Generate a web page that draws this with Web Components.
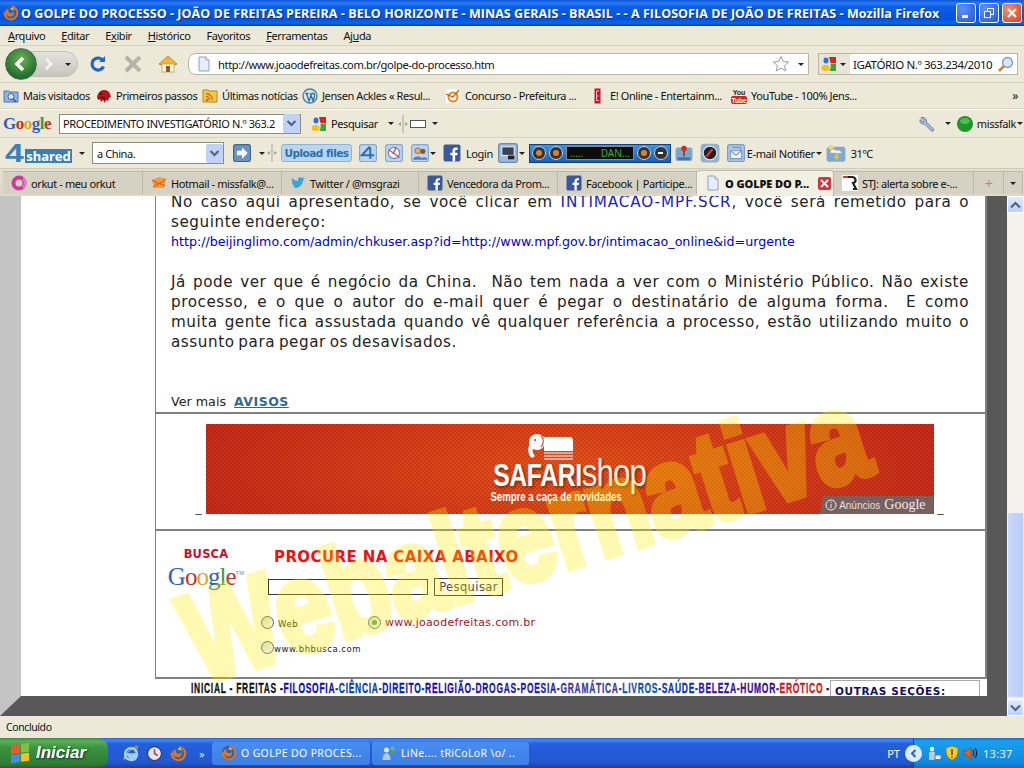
<!DOCTYPE html>
<html lang="pt">
<head>
<meta charset="utf-8">
<title>O GOLPE DO PROCESSO</title>
<style>
  html, body { margin: 0; padding: 0; width: 1024px; height: 768px; overflow: hidden; background: #ece9d8; }
  body { display: flex; flex-direction: column; font: 11px "Noto Sans", sans-serif; letter-spacing: -.4px; color: #111; }
</style>
</head>
<body>
<xp-titlebar></xp-titlebar>
<ff-menubar></ff-menubar>
<ff-navbar></ff-navbar>
<ff-bookmarks></ff-bookmarks>
<ff-googlebar></ff-googlebar>
<ff-sharedbar></ff-sharedbar>
<ff-tabs></ff-tabs>
<jf-viewport>
  <jf-article></jf-article>
  <jf-banner></jf-banner>
  <jf-search></jf-search>
  <jf-footernav></jf-footernav>
</jf-viewport>
<ff-status></ff-status>
<xp-taskbar></xp-taskbar>

<script>
const ICONS = {
  firefox: `<circle cx="8" cy="8" r="7.4" fill="#2b63b4"/><path d="M8 .6a7.4 7.4 0 1 1-7.3 6c.4.9.9 1.2 1.5 1.2.1-2 1.400-3.200 3.100-3.800C4.900 6.200 6 8.300 8.200 8.300c1.300 0 2.200-.8 2.300-2 1.500 2.700-.6 5.500-3.500 5.300C4.800 11.400 3 9.800 3.200 8 3 11 4.800 13.500 8 13.500c3.400 0 5.500-2.800 5.300-5.800-.2-3-2.300-5.200-4.400-5.500.5-.6.3-1.200-.9-1.600z" fill="#e8731a"/><path d="M8.800 2.200c1.500.8 2.400 2 2.400 3.300-1-1-2.400-1.300-3.800-1 .2-1 .7-1.700 1.400-2.300z" fill="#f9c23c"/>`,
  page: `<path d="M3 1h7l3 3v11H3z" fill="#e6eefa" stroke="#8ba3c7"/><path d="M10 1v3h3" fill="#fff" stroke="#8ba3c7"/>`,
  visited: `<path d="M1 3h5l1 1h8v10H1z" fill="#8eb4e3" stroke="#4a76b0"/><circle cx="8" cy="8.500" r="3" fill="#dce9f9" stroke="#2f5f9e"/><path d="M10 11l3 3" stroke="#2f5f9e" stroke-width="1.600"/>`,
  redhat: `<path d="M1 9c1-4 3-7 7-7 3 0 5 1 6 4l1 3-2 1-1 3-2-1-1 3-2-3-2 2-1-3-2 1z" fill="#b3131b"/><circle cx="5" cy="6" r="1" fill="#111"/><path d="M3 11l3-2 3 2" fill="none" stroke="#400" />`,
  rss: `<path d="M1 2h5l1 1h8v11H1z" fill="#f2c94c" stroke="#b58a17"/><circle cx="5" cy="12" r="1.300" fill="#d9661b"/><path d="M4 8.500a3.500 3.500 0 0 1 3.500 3.500M4 5.500a6.500 6.500 0 0 1 6.500 6.500" fill="none" stroke="#d9661b" stroke-width="1.400"/>`,
  wp: `<circle cx="8" cy="8" r="7" fill="#d8e6ee" stroke="#4c84a0" stroke-width="1.400"/><path d="M3.500 5.500h3M9 5.500h3.500M4.500 5.500l2.500 7.500 2-5.500-1-2M8.500 5.500l2.500 7.500 1.500-4.500c.3-1 0-2-.6-3" fill="none" stroke="#2f6f90" stroke-width="1.300"/>`,
  concurso: `<rect x="1" y="1" width="14" height="14" fill="#fff"/><circle cx="8" cy="9" r="4.500" fill="none" stroke="#e8881a" stroke-width="2"/><path d="M1 6l7 3 6-7" fill="none" stroke="#c9561a" stroke-width="1.200"/>`,
  eonline: `<rect x="4.500" y="0.500" width="6" height="15" fill="#d4101c"/><path d="M6.500 3h2.500M6.500 8h2M6.500 12.500h2.500M6.500 3v9.500" stroke="#fbd" stroke-width="1" fill="none"/>`,
  youtube: `<rect x="0" y="8" width="16" height="8" rx="2" fill="#d9231f"/><text x="8" y="6.500" font-size="7" font-family="Liberation Sans" font-weight="bold" text-anchor="middle" fill="#222" letter-spacing="0">You</text><text x="8" y="14.500" font-size="6.500" font-family="Liberation Sans" font-weight="bold" text-anchor="middle" fill="#fff" letter-spacing="0">Tube</text>`,
  gmulti: `<path d="M8 1h7v6H9.500z" fill="#d8241c"/><path d="M9.500 7.500H15V15H8.500c1.200-2.500 1.500-5 1-7.500z" fill="#3aa63a"/><ellipse cx="4.500" cy="12" rx="4" ry="3" fill="#f4c20d"/><ellipse cx="5" cy="4.500" rx="2.500" ry="3" fill="#2f6fd8"/>`,
  wrench: `<path d="M2 1.500l3 3-1 1.500-3-2.500c-.5 3 1.500 5 4.500 4.500l7 7c1 1 3-1 2-2l-7-7c.5-3-2-5-5.500-4.500z" fill="#a9bbd6" stroke="#4b6b99" stroke-width=".8"/>`,
  blue4: `<rect x=".5" y=".5" width="15" height="15" rx="2" fill="#bcd4ee" stroke="#86a8cc"/><path d="M9.500 2.500L2.500 10h11M10 3v10" fill="none" stroke="#2a6fae" stroke-width="1.800"/>`,
  globe: `<rect x=".5" y=".5" width="15" height="15" rx="2" fill="#bcd4ee" stroke="#86a8cc"/><circle cx="8" cy="8" r="5" fill="#e6f0fa" stroke="#6a8fb5"/><path d="M3 5l6 4 4 3M10 3L7 9" stroke="#c14a4a" fill="none"/>`,
  people: `<rect x=".5" y=".5" width="15" height="15" rx="2" fill="#bcd4ee" stroke="#86a8cc"/><circle cx="6" cy="6" r="2.500" fill="#e9b06a" stroke="#7a4a10" stroke-width=".6"/><circle cx="10.500" cy="6.500" r="2.300" fill="#8a5a2a"/><path d="M2 14c0-4 8-4 8 0zM9 14c0-3 5.500-3 5.500 0z" fill="#4f7fb8"/>`,
  fb: `<rect x=".5" y=".5" width="15" height="15" rx="1.500" fill="#3b5998"/><path d="M10.800 15.500V10h1.900l.3-2.200h-2.200V6.400c0-.7.2-1.100 1.100-1.100H13V3.300c-.2 0-.9-.1-1.700-.1-1.700 0-2.800 1-2.800 2.900v1.700H6.600V10h1.900v5.500z" fill="#fff"/>`,
  monitor: `<rect x=".5" y=".5" width="15" height="15" rx="2" fill="#9bb9d8" stroke="#6a8db3"/><rect x="3" y="3" width="10" height="7" fill="#39424e" stroke="#dde7f2"/><rect x="8" y="10" width="5" height="3" fill="#222"/>`,
  arrowR: `<rect x=".5" y=".5" width="15" height="15" rx="2" fill="#6b93bf" stroke="#3d6792"/><path d="M3.500 6h4.500V3l5 5-5 5v-3H3.500z" fill="#fff"/>`,
  joy: `<rect x=".5" y="3" width="15" height="12" rx="2" fill="#7fa4c9"/><path d="M3 12h10l1 2H2z" fill="#3e6a96"/><path d="M8 5v6" stroke="#555" stroke-width="1.500"/><circle cx="8" cy="4" r="2.500" fill="#d42a1c"/>`,
  gauge: `<rect x=".5" y=".5" width="15" height="15" rx="3" fill="#8fb0d0"/><circle cx="8" cy="8" r="5.500" fill="#222" stroke="#dbe6f0"/><path d="M5 11l5-6" stroke="#e33" stroke-width="1.600"/>`,
  mail: `<rect x=".5" y=".5" width="15" height="15" rx="2" fill="#a9c5e2" stroke="#7c9dc2"/><path d="M3 6h10v7H3z" fill="#eef4fa" stroke="#7c9dc2"/><path d="M3 6l5 4 5-4M5 3h7v3" fill="none" stroke="#7c9dc2"/>`,
  weather: `<rect x=".5" y="3" width="15" height="12" rx="2" fill="#7fa9d4"/><path d="M3 8c0-3 4-4 5-2 2-1 5 0 4.500 2.500z" fill="#f2f2ee" stroke="#999" stroke-width=".5"/><path d="M9 8l-3 4h2l-1 3 4-4.500H9l1-2.500z" fill="#f5c518"/><circle cx="4" cy="3.500" r="2" fill="#f6d55c"/>`,
  mail2: `<path d="M1 5l7-3 7 2-2 9H3z" fill="#f29b3a"/><path d="M1 5l7 4 7-5M2 12l5-3M14 11l-5-2.500" fill="none" stroke="#d9481c"/>`,
  twitter: `<path d="M1 12c5 2.500 11 .5 12-6.500l2-2-2 .5 1-2-2 1C10 1 7 3 8 6 5.500 6 3 4.500 2 3 1.500 5 2 6.500 3 7.500L2 7c0 2 1 3 2.500 3.500H3c.5 1 1.500 1.500 2.500 1.500C4 13 2.500 13 1 12z" fill="#3aa6d8"/>`,
  orkut: `<circle cx="8" cy="8" r="5.500" fill="none" stroke="#cc3b9c" stroke-width="4"/><path d="M12 3.500a5.500 5.500 0 0 1 0 9" fill="none" stroke="#e87ac4" stroke-width="3"/>`,
  stj: `<rect x="0" y="0" width="16" height="16" fill="#fff"/><path d="M1 2h9c4 0 5 5 1 6l3 6h-3M1 2" fill="none" stroke="#222" stroke-width="2.200"/><path d="M1 2h5" stroke="#d33" stroke-width="2"/>`,
  ie: `<path d="M3 9h11c0-4-2-6-5.500-6C5 3 3 6 3 9s2 5 5.500 5c2.500 0 4.500-1 5-3h-3c-1 1.200-4 1.200-4.500-2" fill="none" stroke="#9fd0ff" stroke-width="2.400"/><path d="M2 14C1 11 8 3 14 1c2 1-1 4-2 5" fill="none" stroke="#f2c230" stroke-width=".9"/>`,
  clock: `<circle cx="8" cy="8" r="6.500" fill="#dce9fa" stroke="#335"/><path d="M8 4v4l3 2" stroke="#c33" stroke-width="1.500" fill="none"/>`,
  people2: `<circle cx="5.500" cy="5" r="2.500" fill="#dfe7f2"/><path d="M1.500 15c0-9 8-9 8 0z" fill="#b9c9dd"/><circle cx="11.500" cy="3.500" r="2" fill="#6fbd5a"/><path d="M9 9c0-4 6-4 6-1z" fill="#5ba14a"/>`,
  shield: `<path d="M8 1l6 2c0 6-1 10-6 12C3 13 2 9 2 3z" fill="#f4cf2e" stroke="#a8860e"/><path d="M8 4v6M8 11.500v1.500" stroke="#8a4a0a" stroke-width="1.800"/>`,
  speaker: `<path d="M2 6h3l4-4v12l-4-4H2z" fill="#e0661c" stroke="#8a3a0a" stroke-width=".6"/><path d="M11 5c1 2 1 4 0 6M13 3c2 3 2 7 0 10" fill="none" stroke="#1a1a1a" stroke-width="1.200"/>`,
  netdev: `<circle cx="6" cy="4" r="2.200" fill="#f1f4fa"/><path d="M3 15V8c0-2 6-2 6 0v7z" fill="#b9cfe8"/><rect x="9" y="10" width="6" height="4.500" fill="#e8eef6" stroke="#678"/>`
};
const icon = (name, size = 16) => `<svg width="${size}" height="${size}" viewBox="0 0 16 16" style="display:block;flex:none">${ICONS[name]}</svg>`;
const drop = `<i style="display:block;flex:none;width:0;height:0;border:3px solid transparent;border-top:3px solid #222;border-bottom:0"></i>`;
const grip = `<svg width="10" height="20" viewBox="0 0 10 20" style="display:block;flex:none"><path d="M5 1v18" stroke="#aaa69a"/><path d="M3 8l-3 2 3 2zM7 8l3 2-3 2z" fill="#a9a594"/></svg>`;
const comboBtn = `<svg width="17" height="19" viewBox="0 0 17 19" style="display:block;flex:none"><rect width="17" height="19" rx="2" fill="#c1d2f7"/><path d="M4.500 7l4 4 4-4" fill="none" stroke="#4d6185" stroke-width="2"/></svg>`;

// base for the small bars: shadow root set from css + html
class Bar extends HTMLElement {
  connectedCallback() {
    this.attachShadow({ mode: "open" }).innerHTML = `<style>:host{display:flex;align-items:center;flex:none;box-sizing:border-box}${this.css()}</style>${this.html()}`;
  }
  css() { return ""; }
  html() { return ""; }
}

class XpTitlebar extends Bar {
  css() { return `
    :host{height:26px;padding:0 2px 0 3px;color:#fff;background:linear-gradient(#0a55d8 0,#2a7cf4 3px,#0a5ee6 7px,#0553dc 19px,#0a66ee 23px,#0344b8 26px);font:bold 12.5px "Open Sans","Noto Sans",sans-serif;letter-spacing:.06px;text-shadow:1px 1px 0 #0b2f8c}
    .t{margin-left:2px;flex:1;white-space:nowrap}
    .b{width:20px;height:20px;border:1px solid #fff;border-radius:3px;box-sizing:border-box;background:radial-gradient(circle at 30% 30%,#5b92f5,#2457d8);margin-left:3px;display:flex;align-items:center;justify-content:center}
    .x{background:radial-gradient(circle at 30% 30%,#ee9077,#d4411c)}
  `; }
  html() { return `${icon("firefox")}<span class="t">O GOLPE DO PROCESSO - JOÃO DE FREITAS PEREIRA - BELO HORIZONTE - MINAS GERAIS - BRASIL - - A FILOSOFIA DE JOÃO DE FREITAS - Mozilla Firefox</span>
    <div class="b"><svg width="12" height="12"><rect x="2" y="8" width="6" height="3" fill="#fff"/></svg></div>
    <div class="b"><svg width="12" height="12" fill="none" stroke="#fff"><rect x="4.500" y="1.500" width="6" height="6"/><rect x="1.500" y="4.500" width="6" height="6" fill="#3a6ce0"/></svg></div>
    <div class="b x"><svg width="12" height="12"><path d="M2 2l8 8M10 2l-8 8" stroke="#fff" stroke-width="2"/></svg></div>`; }
}

class FfMenubar extends Bar {
  css() { return `:host{height:20px;gap:16px;padding-left:8px;border-bottom:1px solid #d8d4c4}u{text-decoration-thickness:1px;text-underline-offset:1px}`; }
  html() { return `<span><u>A</u>rquivo</span><span><u>E</u>ditar</span><span>E<u>x</u>ibir</span><span><u>H</u>istórico</span><span>Fa<u>v</u>oritos</span><span><u>F</u>erramentas</span><span>Aj<u>u</u>da</span>`; }
}

class FfNavbar extends Bar {
  css() { return `
    :host{height:37px;padding-left:5px;border-bottom:1px solid #d8d4c4}
    .back{width:32px;height:32px;border-radius:50%;background:radial-gradient(circle at 50% 35%,#6fb05a,#1f6b2a 75%);border:1px solid #5d6f5d;box-sizing:border-box;display:flex;align-items:center;justify-content:center;position:relative;z-index:1}
    .fwd{width:55px;height:26px;margin-left:-14px;padding-left:17px;box-sizing:border-box;border-radius:0 13px 13px 0;background:linear-gradient(#e4e2da,#c8c6be);border:1px solid #c4c2b8;display:flex;align-items:center;gap:6px}
    .url{width:621px;height:22px;margin-left:10px;box-sizing:border-box;border:1px solid #b8b5a4;border-radius:8px 0 0 8px;background:#fff;display:flex;align-items:center;padding-left:7px;font-size:11.200px}
    .url span{margin-left:6px;flex:1}
    .s{width:200px;height:22px;margin-left:9px;box-sizing:border-box;border:1px solid #b8b5a4;background:#fff;display:flex;align-items:center;font-size:11.500px}
    .g{display:flex;align-items:center;gap:3px;background:#e8e5d8;padding:0 4px 0 2px;height:20px;margin-right:3px}
    .mg{margin-left:5px}
  `; }
  html() { return `<div class="back"><svg width="18" height="18"><path d="M11 3L5 9l6 6" fill="none" stroke="#fff" stroke-width="3.400"/></svg></div>
    <div class="fwd"><svg width="14" height="14"><path d="M5 2l5 5-5 5" fill="none" stroke="#f4f2ec" stroke-width="3"/></svg><span style="margin-left:4px">${drop}</span></div>
    <svg style="margin-left:11px;flex:none" width="18" height="18" viewBox="0 0 18 18"><path d="M14.500 11.500A6 6 0 1 1 13 4.500" fill="none" stroke="#1f66c9" stroke-width="3.200"/><path d="M10 7h6V1z" fill="#1f66c9"/></svg>
    <svg style="margin-left:16px;flex:none" width="20" height="18" viewBox="0 0 20 18"><path d="M3 2l14 14M17 2L3 16" stroke="#b5b3aa" stroke-width="4"/></svg>
    <svg style="margin-left:15px;flex:none" width="20" height="18" viewBox="0 0 20 18"><path d="M1 9l9-8 9 8-2 1H3z" fill="#f2b632" stroke="#b07a16" stroke-width=".8"/><rect x="4" y="9" width="12" height="8" fill="#fbf3d8" stroke="#b9a66a" stroke-width=".8"/><rect x="8" y="11" width="4" height="6" fill="#8a5a2a"/></svg>
    <div class="url">${icon("page")}<span>http://www.joaodefreitas.com.br/golpe-do-processo.htm</span>
      <svg width="18" height="18" viewBox="0 0 18 18" style="flex:none"><path d="M9 1.500l2.300 5 5.200.6-3.900 3.500 1.100 5.300L9 13.200l-4.700 2.700 1.100-5.300L1.500 7.100l5.200-.6z" fill="#fff" stroke="#9a9a92"/></svg>
      <span style="flex:none;margin:0 4px 0 8px">${drop}</span></div>
    <div class="s"><div class="g">${icon("gmulti")}${drop}</div><span style="white-space:nowrap">IGATÓRIO N.º 363.234/2010</span>
      <svg class="mg" width="17" height="17" viewBox="0 0 17 17" style="flex:none"><circle cx="10.500" cy="6.500" r="5" fill="#d5e6f7" stroke="#7a9cbe" stroke-width="1.300"/><path d="M7 10l-5 5" stroke="#c9853a" stroke-width="2.600"/></svg></div>`; }
}

class FfBookmarks extends Bar {
  css() { return `
    :host{height:26px;padding-left:3px;border-bottom:1px solid #d8d4c4}
    .i{display:flex;align-items:center;gap:4px;flex:none;white-space:nowrap}
    .m{margin-left:auto;margin-right:6px;font-size:12px}
  `; }
  html() {
    const items = [["visited","Mais visitados",93],["redhat","Primeiros passos",106],["rss","Últimas notícias",100],["wp","Jensen Ackles « Resul...",143],["concurso","Concurso - Prefeitura ...",145],["eonline","E! Online - Entertainm...",141],["youtube","YouTube - 100% Jens...",170]];
    return items.map(([n, t, w]) => `<div class="i" style="width:${w}px">${icon(n)}<span>${t}</span></div>`).join("") + `<span class="m">»</span>`;
  }
}

class FfGooglebar extends Bar {
  css() { return `
    :host{height:29px;padding-left:3px;border-bottom:1px solid #d8d4c4;border-top:1px solid #fff}
    .logo{font:bold 17px "Liberation Serif",serif;letter-spacing:-.5px;width:56px;flex:none}
    .combo{width:242px;height:20px;box-sizing:border-box;border:1px solid #8f8d80;background:#fff;display:flex;align-items:center;padding-left:3px;justify-content:space-between;white-space:nowrap;font-size:11px}
    .sp{flex:1}
  `; }
  html() { return `<div class="logo"><span style="color:#2f5fc4">G</span><span style="color:#c8321e">o</span><span style="color:#e0a818">o</span><span style="color:#2f5fc4">g</span><span style="color:#3a9a3a">l</span><span style="color:#c8321e">e</span></div>
    <div class="combo"><span>PROCEDIMENTO INVESTIGATÓRIO N.º 363.2</span>${comboBtn}</div>
    <span style="margin-left:10px">${icon("gmulti")}</span><span style="margin-left:4px">Pesquisar</span>
    <span style="margin-left:10px">${drop}</span><span style="margin-left:4px">${grip}</span>
    <svg style="margin-left:2px;flex:none" width="16" height="8"><rect x=".5" y=".5" width="15" height="7" fill="#fff" stroke="#555"/></svg><span style="margin-left:6px">${drop}</span>
    <span class="sp"></span>${icon("wrench")}<span style="margin-left:10px">${drop}</span>
    <svg style="margin-left:6px;flex:none" width="16" height="16"><circle cx="8" cy="8" r="8" fill="#22922a"/><ellipse cx="8" cy="5" rx="5" ry="3" fill="#4fc04f"/></svg>
    <span style="margin-left:4px">missfalk</span><span style="margin-left:1px;margin-right:1px">${drop}</span>`; }
}

class FfSharedbar extends Bar {
  css() { return `
    :host{height:30px;padding-left:5px}
    .logo{display:flex;align-items:flex-end;width:67px;flex:none;height:22px;letter-spacing:0}
    .four{display:block;font:bold 25px "Liberation Sans",sans-serif;color:#3f7fb5;line-height:22px;width:20px;transform:scaleX(1.35);transform-origin:0 50%}
    .sh{background:#3a7fb5;color:#fff;font:bold 13px "Noto Sans",sans-serif;height:14px;line-height:14px;flex:1;margin-bottom:1px;text-align:center}
    .combo{width:132px;height:22px;box-sizing:border-box;border:1px solid #8f8d80;background:#fff;display:flex;align-items:center;justify-content:space-between;padding-left:4px;font-size:11px}
    .up{width:71px;height:18px;box-sizing:border-box;background:#b8d5f2;border:1px solid #8fb3d8;border-radius:3px;font:bold 10.500px "DejaVu Sans",sans-serif;color:#2a6fae;display:flex;align-items:center;justify-content:center;white-space:nowrap;letter-spacing:-.5px}
    .pl{width:142px;height:19px;box-sizing:border-box;background:linear-gradient(#3d94e0,#1a5fb0);border:1px solid #0d3f8a;display:flex;align-items:center;padding:0 2px;gap:3px;letter-spacing:0}
    .rb{width:14px;height:14px;border-radius:50%;background:#333;border:1px solid #ccc;box-sizing:border-box;flex:none;display:flex;align-items:center;justify-content:center}
    .rb i{display:block;width:6px;height:6px;border-radius:50%;background:#d9822b}
    .lcd{width:68px;height:14px;background:#0c0c0c;border:1px solid #888;box-sizing:border-box;color:#2fb52f;font-size:10px;line-height:12px;display:flex;justify-content:space-between;padding:0 3px;white-space:nowrap;flex:none}
  `; }
  html() { return `<div class="logo"><span class="four">4</span><span class="sh">shared</span></div>
    <span style="margin-left:7px">${drop}</span>
    <div class="combo" style="margin-left:7px"><span>a China.</span>${comboBtn}</div>
    <span style="margin-left:9px">${icon("arrowR",18)}</span><span style="margin-left:8px">${drop}</span><span style="margin-left:2px">${grip}</span>
    <div class="up" style="margin-left:4px">Upload files</div>
    <span style="margin-left:7px">${icon("blue4",18)}</span><span style="margin-left:8px">${icon("globe",18)}</span><span style="margin-left:8px">${icon("people",18)}</span><span style="margin-left:1px">${drop}</span>
    <span style="margin-left:7px">${icon("fb",18)}</span><span style="margin-left:5px">Login</span>
    <span style="margin-left:5px">${icon("monitor",20)}</span><span style="margin-left:1px">${drop}</span>
    <div class="pl" style="margin-left:4px"><span class="rb"><i></i></span><span class="rb"><i></i></span><span class="lcd"><span>.....</span><span>DAN...</span></span><span class="rb"><i></i></span><span class="rb"><i style="width:5px;height:2px;border-radius:0;background:#fff"></i></span></div>
    <span style="margin-left:4px">${icon("joy",18)}</span><span style="margin-left:7px">${icon("gauge",20)}</span><span style="margin-left:7px">${icon("mail",18)}</span>
    <span style="margin-left:2px;white-space:nowrap">E-mail Notifier</span><span style="margin-left:1px">${drop}</span>
    <span style="margin-left:4px">${icon("weather",20)}</span><span style="margin-left:5px">31ºC</span>`; }
}

class FfTabs extends Bar {
  css() { return `
    :host{height:28px;align-items:flex-start;padding:2px 0 0 3px;background:linear-gradient(#e4e0d0,#ddd9c9);border-top:1px solid #cfcbbc}
    .t{height:23px;box-sizing:border-box;flex:none;display:flex;align-items:center;gap:4px;padding:0 0 0 8px;background:#d6d2c3;border:1px solid #bdb9a9;border-bottom:0;border-left:0;white-space:nowrap}
    .t:first-child{border-left:1px solid #bdb9a9}
    .on{height:26px;margin-top:-1px;padding-bottom:1px;background:#f2efe3;font-weight:bold;border-radius:3px 3px 0 0;font-size:11px;color:#111;letter-spacing:-.1px}
    .on b{flex:1}
    .x{width:13px;height:13px;background:#d8333a;border-radius:2px;margin-right:2px;display:flex;align-items:center;justify-content:center;flex:none}
    .c{justify-content:center;padding:0;color:#9a968a;font-size:15px}
  `; }
  html() {
    const tabs = [["orkut","orkut - meu orkut",140],["mail2","Hotmail - missfalk@...",139],["twitter","Twitter / @msgrazi",137],["fb","Vencedora da Prom...",139],["fb","Facebook | Participe...",139]];
    return tabs.map(([n, t, w]) => `<div class="t" style="width:${w}px">${icon(n)}<span>${t}</span></div>`).join("") +
      `<div class="t on" style="width:137px">${icon("page")}<b>O GOLPE DO P...</b><span class="x"><svg width="9" height="9"><path d="M1 1l7 7M8 1L1 8" stroke="#fff" stroke-width="2"/></svg></span></div>
       <div class="t" style="width:140px">${icon("stj")}<span>STJ: alerta sobre e-...</span></div>
       <div class="t c" style="width:30px">+</div><div class="t c" style="width:19px">${drop}</div>`;
  }
}

// page area: 3D frame of the old site + scrollbar on the right
class JfViewport extends HTMLElement {
  connectedCallback() {
    this.attachShadow({ mode: "open" }).innerHTML = `<style>
      :host{display:flex;flex:none;height:520px;position:relative;overflow:hidden;background:#fff;letter-spacing:0}
      .frame{width:1007px;box-sizing:border-box;border-left:21px solid #c4c4c4;border-right:20px solid #585858;border-bottom:20px solid #585858;padding-left:134px;background:#fff;flex:none;display:flex;flex-direction:column}
      .sb{width:17px;flex:none;background:#f3f3ec;display:flex;flex-direction:column;justify-content:space-between;position:relative}
      .btn{height:17px;background:linear-gradient(#e2ebfd,#bcd0f8);border:1px solid #fff;box-sizing:border-box;border-radius:2px;display:flex;align-items:center;justify-content:center}
      .thumb{position:absolute;left:0;right:0;top:316px;height:186px;background:linear-gradient(90deg,#c9d8fb,#b9ccf7);border:1px solid #eef3fe;box-sizing:border-box;border-radius:2px}
      .mark{position:absolute;left:206px;bottom:12px;font:bold 128px "Liberation Sans",sans-serif;color:#ffee00;-webkit-text-stroke:7px #ffee00;opacity:.3;transform:rotate(-17.500deg) scaleX(.78);transform-origin:0 100%;white-space:nowrap;pointer-events:none;line-height:1}
    </style>
    <div class="frame"><slot></slot></div>
    <div class="sb">
      <div class="btn"><svg width="11" height="8"><path d="M1 6.500l4.500-4.500 4.500 4.500" fill="none" stroke="#4d6185" stroke-width="2"/></svg></div>
      <div class="thumb"></div>
      <div class="btn"><svg width="11" height="8"><path d="M1 1.500l4.500 4.500 4.500-4.500" fill="none" stroke="#4d6185" stroke-width="2"/></svg></div>
    </div>
    <div class="mark">Webalternativa</div>`;
  }
}

class JfArticle extends HTMLElement {
  connectedCallback() {
    this.attachShadow({ mode: "open" }).innerHTML = `<style>
      :host{display:block;flex:none;height:218px;box-sizing:border-box;padding:0 16px 0 15px;border-left:1px solid #808080;border-right:2px solid #808080;border-bottom:2px solid #808080;font:15.200px/20px "DejaVu Sans",sans-serif;letter-spacing:.55px;word-spacing:-1.500px;color:#222;overflow:hidden}
      .j{text-align:justify;text-align-last:justify}
      .top{margin-top:-4px}
      .lnk{font-size:12.650px;color:#0000c8;white-space:nowrap;height:20px;margin-bottom:20px;letter-spacing:0;word-spacing:0}
      a{color:#2020c8;text-decoration:none}
      .top a{letter-spacing:.9px}
      .more{margin-top:40px;font-size:12.700px;height:20px;letter-spacing:0;word-spacing:0}
      .more a{color:#2c6a94;font-weight:bold;text-decoration:underline;font-size:12.500px;letter-spacing:.5px;margin-left:8px}
    </style>
    <div class="j top">No caso aqui apresentado, se você clicar em <a>INTIMACAO-MPF.SCR</a>, você será remetido para o</div>
    <div>seguinte endereço:</div>
    <div class="lnk">http://beijinglimo.com/admin/chkuser.asp?id=http://www.mpf.gov.br/intimacao_online&amp;id=urgente</div>
    <div class="j">Já pode ver que é negócio da China.&nbsp; Não tem nada a ver com o Ministério Público. Não existe</div>
    <div class="j">processo, e o que o autor do e-mail quer é pegar o destinatário de alguma forma.&nbsp; E como</div>
    <div class="j">muita gente fica assustada quando vê qualquer referência a processo, estão utilizando muito o</div>
    <div>assunto para pegar os desavisados.</div>
    <div class="more">Ver mais<a>AVISOS</a></div>`;
  }
}

class JfBanner extends HTMLElement {
  connectedCallback() {
    this.attachShadow({ mode: "open" }).innerHTML = `<style>
      :host{display:flex;flex:none;height:117px;box-sizing:border-box;padding:10px 2px 0 0;border-left:1px solid #808080;border-right:2px solid #808080;border-bottom:2px solid #808080;justify-content:center;align-items:flex-start;gap:4px;font:11px "Liberation Sans",sans-serif}
      .dash{align-self:flex-start;margin-top:79px;color:#222}
      .ad{width:728px;height:90px;flex:none;position:relative;display:flex;flex-direction:column;align-items:center;background:
        repeating-conic-gradient(rgba(120,0,0,.2) 0 25%,transparent 0 50%) 0 0/4px 4px,
        radial-gradient(ellipse 65% 140% at 50% 50%,#e8561a,#c0241c 100%);color:#fff}
      .logo{margin-top:9px;margin-left:-38px}
      .brand{display:flex;align-items:baseline;line-height:30px;margin-top:-5px;text-shadow:2px 2px 3px rgba(90,20,0,.6);transform:scaleX(.8)}
      .brand b{font-size:31px;letter-spacing:-.5px}
      .brand span{font-size:39px;letter-spacing:-1px;font-weight:normal;color:#fbeedd}
      .sub{font:bold 12px "Liberation Sans",sans-serif;margin-top:-1px;margin-left:-26px;white-space:nowrap;transform:scaleX(.8)}
      .tag{position:absolute;right:0;bottom:0;width:114px;height:18px;background:#76615f;display:flex;align-items:center;justify-content:flex-end;gap:2px;padding-right:8px;box-sizing:border-box;clip-path:polygon(4px 0,100% 0,100% 100%,0 100%);font-size:10px;color:#e7dfdd}
      .tag em{font:14px "Liberation Serif",serif;font-style:normal;color:#f3ecea;margin-left:2px}
    </style>
    <span class="dash">_</span>
    <div class="ad">
      <svg class="logo" width="50" height="30" viewBox="0 0 50 30">
        <path d="M18 4h26c3 0 3 3 3 6v8H18z" fill="#fff"/><path d="M18 20h29M18 23h29M18 26h29" stroke="#fff"/>
        <circle cx="11" cy="9" r="8" fill="#fff"/><path d="M4 10c-3 6-2 12 2 15l3-2c-3-3-3-7-1-10z" fill="#fff"/><circle cx="9" cy="7" r="1" fill="#a33"/><path d="M15 3c3 2 3 8 0 11" fill="none" stroke="#c53" stroke-width="1.200"/>
      </svg>
      <div class="brand"><b>SAFARI</b><span>shop</span></div>
      <div class="sub">Sempre a caça de novidades</div>
      <div class="tag"><svg width="12" height="12"><circle cx="6" cy="6" r="5" fill="none" stroke="#eee"/><path d="M6 5v4M6 3v1" stroke="#eee"/></svg><span>Anúncios</span><em>Google</em></div>
    </div>
    <span class="dash">_</span>`;
  }
}

class JfSearch extends HTMLElement {
  connectedCallback() {
    this.attachShadow({ mode: "open" }).innerHTML = `<style>
      :host{display:flex;flex:none;height:148px;box-sizing:border-box;border-left:1px solid #808080;border-right:2px solid #808080;border-bottom:2px solid #808080;padding:16px 0 0 14px;font-family:"DejaVu Sans",sans-serif}
      .l{width:72px;flex:none;display:flex;flex-direction:column;align-items:center;margin-right:26px}
      .busca{font:bold 11.500px "DejaVu Sans",sans-serif;color:#c8102e;letter-spacing:.2px}
      .g{font:25px/24px "Liberation Serif",serif;letter-spacing:-1px;margin-top:4px;white-space:nowrap}
      .g small{font:6px "Liberation Sans",sans-serif;color:#888;vertical-align:10px;letter-spacing:0}
      .r{flex:1}
      h2{margin:0 0 0 6px;font:bold 15px/20px "DejaVu Sans",sans-serif;color:#f01010;white-space:nowrap;letter-spacing:.4px}
      .f{display:flex;align-items:center;margin-top:11px;gap:6px}
      .inp{width:160px;height:16px;box-sizing:border-box;border:1px solid #333}
      .btn{width:69px;height:18px;box-sizing:border-box;border:1px solid #333;display:flex;align-items:center;justify-content:center;font-size:11.500px;color:#444;letter-spacing:.4px}
      .opts{display:grid;grid-template-columns:107px 1fr;margin-top:20px;margin-left:-7px;row-gap:10px}
      .o{display:flex;align-items:flex-start;white-space:nowrap;font-size:8.500px;line-height:13px;color:#222;letter-spacing:.5px}
      .o span:last-child{padding-top:2px}
      .rd{width:13px;height:13px;border-radius:50%;box-sizing:border-box;border:1px solid #556;background:linear-gradient(135deg,#d8d6cc,#fff);margin-right:4px;flex:none;display:flex;align-items:center;justify-content:center}
      .rd.on{border-color:#3b6ea5}.rd.on i{display:block;width:5px;height:5px;border-radius:50%;background:#39b54a}
      .red{font-size:11px;color:#b01020;letter-spacing:.3px;padding-top:0 !important}
      .blue{border-color:#2a5aa8;background:linear-gradient(135deg,#c5d8f2,#fff);margin-right:0}
    </style>
    <div class="l"><span class="busca">BUSCA</span>
      <div class="g"><span style="color:#2f5fc4">G</span><span style="color:#c8321e">o</span><span style="color:#e0a818">o</span><span style="color:#2f5fc4">g</span><span style="color:#3a9a3a">l</span><span style="color:#c8321e">e</span><small>TM</small></div></div>
    <div class="r">
      <h2>PROCURE NA CAIXA ABAIXO</h2>
      <div class="f"><div class="inp"></div><div class="btn">Pesquisar</div></div>
      <div class="opts">
        <div class="o"><span class="rd"></span><span>Web</span></div>
        <div class="o"><span class="rd on"><i></i></span><span class="red">www.joaodefreitas.com.br</span></div>
        <div class="o" style="grid-column:1/3"><span class="rd blue"></span><span>www.bhbusca.com</span></div>
      </div>
    </div>`;
  }
}

class JfFooternav extends HTMLElement {
  connectedCallback() {
    const words = [["FILOSOFIA","#0a0ac0"],["CIÊNCIA","#0a3ac0"],["DIREITO","#0a1ab8"],["RELIGIÃO","#1a0ab8"],["DROGAS","#1a1aa8"],["POESIA","#1a1ab8"],["GRAMÁTICA","#3a3ab0"],["LIVROS","#0a50c0"],["SAÚDE","#0a30c8"],["BELEZA","#2a10b0"],["HUMOR","#3a0a98"]];
    this.attachShadow({ mode: "open" }).innerHTML = `<style>
      :host{display:flex;flex:none;height:17px;align-items:center;padding-left:36px;white-space:nowrap}
      .w{width:636px;flex:none}
      .n{display:inline-block;width:max-content;font:bold 14px "Liberation Sans",sans-serif;letter-spacing:1.200px;transform:scaleX(.605);transform-origin:0 50%;-webkit-text-stroke:.3px currentColor}
      .box{flex:none;width:150px;height:16px;margin-left:3px;align-self:flex-end;box-sizing:border-box;border:1px solid #aaa;border-bottom:0;font:bold 10.500px/17px "DejaVu Sans",sans-serif;letter-spacing:.6px;color:#101060;padding:2px 0 0 4px;overflow:hidden}
    </style>
    <div class="w"><span class="n"><span>INICIAL - FREITAS -</span>${words.map(([w, c]) => `<span style="color:${c}">${w}</span><span style="color:#147">-</span>`).join("")}<span style="color:#e01010">ERÓTICO</span> -</span></div>
    <div class="box">OUTRAS SEÇÕES:</div>`;
  }
}

class FfStatus extends Bar {
  css() { return `:host{height:22px;padding-left:6px;background:#ece9d8;font-size:10.500px}`; }
  html() { return `Concluído`; }
}

class XpTaskbar extends Bar {
  css() { return `
    :host{height:30px;color:#fff;background:linear-gradient(#245edb 0,#3f8cf3 2px,#245edb 6px,#2358d0 24px,#1941a5 30px);font-size:11px;letter-spacing:0}
    .st{width:108px;height:30px;flex:none;background:linear-gradient(#388e3c 0,#5aae5a 3px,#3c923f 10px,#2f7d32 26px,#255f27 30px);border-radius:0 10px 10px 0;display:flex;align-items:center;gap:7px;padding-left:11px;box-sizing:border-box;font:italic bold 17px "Liberation Sans",sans-serif;text-shadow:1px 1px 2px #133}
    .flag{width:18px;height:18px;display:grid;grid-template:1fr 1fr/1fr 1fr;gap:1px;transform:skewY(-8deg);flex:none}
    .ql{display:flex;align-items:center;gap:7px;margin-left:14px;width:90px;flex:none}
    .tb{height:23px;box-sizing:border-box;border-radius:3px;background:linear-gradient(#4a8df0,#3c7fe6);display:flex;align-items:center;gap:4px;padding-left:9px;flex:none;margin-right:2px;white-space:nowrap;font-size:10.500px;letter-spacing:.35px}
    .tray{width:111px;height:30px;flex:none;box-sizing:border-box;background:linear-gradient(#0c6fd6 0,#19a0ee 3px,#1288e0 24px,#0f6fc6 30px);border-left:1px solid #0a4a9e;display:flex;align-items:center;gap:2px}
    .chev{width:17px;height:17px;border-radius:50%;background:#dbeafd;display:flex;align-items:center;justify-content:center;flex:none;margin:0 2px 0 -9px}
  `; }
  html() { return `<div class="st"><div class="flag"><i style="background:#e8592c"></i><i style="background:#7cc142"></i><i style="background:#3d8fe0"></i><i style="background:#f5c21b"></i></div>Iniciar</div>
    <div class="ql">${icon("ie",17)}${icon("clock",17)}${icon("firefox",17)}<span style="font-size:11px;color:#cfe0fb;margin-left:5px">»</span></div>
    <div class="tb" style="width:158px">${icon("firefox")}<span>O GOLPE DO PROCES...</span></div>
    <div class="tb" style="width:157px">${icon("people2")}<span>LiNe.... tRiCoLoR \\o/ ..</span></div>
    <span style="margin-left:auto;margin-right:13px">PT</span>
    <div class="tray"><span class="chev"><svg width="9" height="9"><path d="M6.500 1L3 4.500 6.500 8" fill="none" stroke="#245edb" stroke-width="2"/></svg></span>
      ${icon("netdev")}${icon("shield")}${icon("speaker")}<span style="margin-left:3px;font-size:11px;color:#eaf3ff;letter-spacing:.3px">13:37</span></div>`; }
}

customElements.define("xp-titlebar", XpTitlebar);
customElements.define("ff-menubar", FfMenubar);
customElements.define("ff-navbar", FfNavbar);
customElements.define("ff-bookmarks", FfBookmarks);
customElements.define("ff-googlebar", FfGooglebar);
customElements.define("ff-sharedbar", FfSharedbar);
customElements.define("ff-tabs", FfTabs);
customElements.define("jf-viewport", JfViewport);
customElements.define("jf-article", JfArticle);
customElements.define("jf-banner", JfBanner);
customElements.define("jf-search", JfSearch);
customElements.define("jf-footernav", JfFooternav);
customElements.define("ff-status", FfStatus);
customElements.define("xp-taskbar", XpTaskbar);
</script>
</body>
</html>
